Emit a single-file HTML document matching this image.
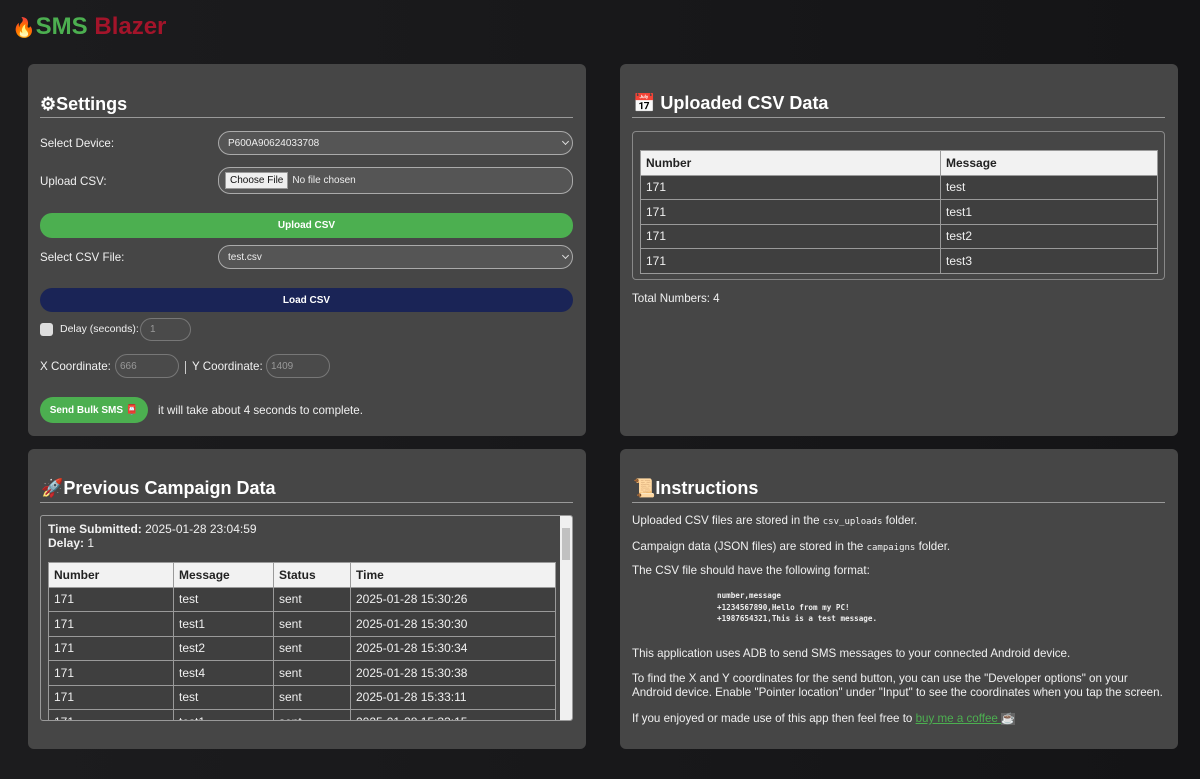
<!DOCTYPE html>
<html><head><meta charset="utf-8"><style>
*{box-sizing:border-box;margin:0;padding:0}
body{width:1200px;height:779px;overflow:hidden;background:linear-gradient(90deg,#1c1c1e,#141416);font-family:"Liberation Sans",Arial,sans-serif;color:#f0f0f0;font-size:12px;position:relative}
.a{position:absolute}
.card{position:absolute;background:#464646;border-radius:6px}
h2{position:absolute;font-size:18px;font-weight:bold;color:#fff;white-space:nowrap}
.hr{position:absolute;height:1px;background:#999}
.lbl{position:absolute;font-size:11.6px;white-space:nowrap}
.inp{position:absolute;background:#555;border:1px solid #aaa;border-radius:12px;font-size:10px;color:#eee;padding-left:9px;display:flex;align-items:center}
.ph{color:#999;border-color:#777;background:#4a4a4a}
.btn{position:absolute;border-radius:12px;color:#fff;font-weight:bold;font-size:10px;display:flex;align-items:center;justify-content:center}
table{border-collapse:collapse;position:absolute;font-size:12px}
td,th{border:1px solid #9a9a9a;text-align:left;padding:0 5px;height:24.5px;font-weight:normal}
th{background:#f2f2f2;color:#222;font-weight:bold}
td{background:#3f3f3f;color:#f0f0f0}
.mono{font-family:"DejaVu Sans Mono","Liberation Mono",monospace;font-size:9px}
.chev{position:absolute;right:4px;top:7px;width:5px;height:5px;border-right:1.5px solid #ddd;border-bottom:1.5px solid #ddd;transform:rotate(45deg)}
</style></head><body>
<div class="a" style="left:12px;top:13px;font-size:24px;font-weight:bold;white-space:nowrap"><span style="font-size:19px">🔥</span><span style="color:#4caf50">SMS</span> <span style="color:#a3142a">Blazer</span></div>

<div class="card" style="left:28px;top:64px;width:558px;height:372px"></div>
<h2 style="left:40px;top:94px">⚙Settings</h2>
<div class="hr" style="left:40px;top:117px;width:533px"></div>
<div class="lbl" style="left:40px;top:137px">Select Device:</div>
<div class="inp" style="left:218px;top:131px;width:355px;height:24px">P600A90624033708<div class="chev"></div></div>
<div class="lbl" style="left:40px;top:175px">Upload CSV:</div>
<div class="inp" style="left:218px;top:167px;width:355px;height:27px;padding-left:6px"><span style="background:#efefef;color:#111;padding:2px 4px;border:1px solid #999;font-size:10px">Choose File</span><span style="margin-left:4px">No file chosen</span></div>
<div class="btn" style="left:40px;top:213px;width:533px;height:25px;background:#4caf50">Upload CSV</div>
<div class="lbl" style="left:40px;top:251px">Select CSV File:</div>
<div class="inp" style="left:218px;top:245px;width:355px;height:24px">test.csv<div class="chev"></div></div>
<div class="btn" style="left:40px;top:288px;width:533px;height:24px;background:#1a2456">Load CSV</div>
<div class="a" style="left:40px;top:323px;width:13px;height:13px;background:#ddd;border-radius:3px"></div>
<div class="lbl" style="left:60px;top:323px;font-size:10.5px">Delay (seconds):</div>
<div class="inp ph" style="left:140px;top:318px;width:51px;height:23px">1</div>
<div class="lbl" style="left:40px;top:360px">X Coordinate:</div>
<div class="inp ph" style="left:115px;top:354px;width:64px;height:24px;padding-left:4px">666</div>
<div class="a" style="left:185px;top:361px;width:1px;height:13px;background:#ccc"></div>
<div class="lbl" style="left:192px;top:360px">Y Coordinate:</div>
<div class="inp ph" style="left:266px;top:354px;width:64px;height:24px;padding-left:4px">1409</div>
<div class="btn" style="left:40px;top:397px;width:108px;height:26px;background:#4caf50;border-radius:13px">Send Bulk SMS 📮</div>
<div class="lbl" style="left:158px;top:404px">it will take about 4 seconds to complete.</div>

<div class="card" style="left:620px;top:64px;width:558px;height:372px"></div>
<h2 style="left:633px;top:93px">📅 Uploaded CSV Data</h2>
<div class="hr" style="left:632px;top:117px;width:533px"></div>
<div class="a" style="left:632px;top:131px;width:533px;height:149px;border:1px solid #888;border-radius:4px"></div>
<table style="left:640px;top:150px;width:518px">
<tr><th style="width:300px">Number</th><th>Message</th></tr>
<tr><td>171</td><td>test</td></tr><tr><td>171</td><td>test1</td></tr><tr><td>171</td><td>test2</td></tr><tr><td>171</td><td>test3</td></tr>
</table>
<div class="lbl" style="left:632px;top:292px">Total Numbers: 4</div>

<div class="card" style="left:28px;top:449px;width:558px;height:300px"></div>
<h2 style="left:41px;top:478px">🚀Previous Campaign Data</h2>
<div class="hr" style="left:40px;top:502px;width:533px"></div>
<div class="a" style="left:40px;top:515px;width:533px;height:206px;border:1px solid #999;border-radius:3px;overflow:hidden">
<div class="a" style="left:7px;top:6px;line-height:14px">
<b>Time Submitted:</b> 2025-01-28 23:04:59<br><b>Delay:</b> 1</div>
<table style="left:7px;top:46px;width:508px">
<tr><th style="width:125px">Number</th><th style="width:100px">Message</th><th style="width:77px">Status</th><th>Time</th></tr>
<tr><td>171</td><td>test</td><td>sent</td><td>2025-01-28 15:30:26</td></tr>
<tr><td>171</td><td>test1</td><td>sent</td><td>2025-01-28 15:30:30</td></tr>
<tr><td>171</td><td>test2</td><td>sent</td><td>2025-01-28 15:30:34</td></tr>
<tr><td>171</td><td>test4</td><td>sent</td><td>2025-01-28 15:30:38</td></tr>
<tr><td>171</td><td>test</td><td>sent</td><td>2025-01-28 15:33:11</td></tr>
<tr><td>171</td><td>test1</td><td>sent</td><td>2025-01-28 15:33:15</td></tr>
</table>
<div class="a" style="right:0;top:0;width:12px;height:206px;background:#f0f0f0"></div>
<div class="a" style="right:2px;top:12px;width:8px;height:32px;background:#c1c1c1"></div>
</div>

<div class="card" style="left:620px;top:449px;width:558px;height:300px"></div>
<h2 style="left:633px;top:478px">📜Instructions</h2>
<div class="hr" style="left:632px;top:502px;width:533px"></div>
<div class="lbl" style="left:632px;top:514px">Uploaded CSV files are stored in the <span class="mono">csv_uploads</span> folder.</div>
<div class="lbl" style="left:632px;top:540px">Campaign data (JSON files) are stored in the <span class="mono">campaigns</span> folder.</div>
<div class="lbl" style="left:632px;top:564px">The CSV file should have the following format:</div>
<pre class="a mono" style="left:717px;top:590px;line-height:11.7px;color:#eee;font-size:7.6px;font-weight:bold">number,message
+1234567890,Hello from my PC!
+1987654321,This is a test message.</pre>
<div class="lbl" style="left:632px;top:647px">This application uses ADB to send SMS messages to your connected Android device.</div>
<div class="lbl" style="left:632px;top:672px;line-height:13.5px">To find the X and Y coordinates for the send button, you can use the "Developer options" on your<br>Android device. Enable "Pointer location" under "Input" to see the coordinates when you tap the screen.</div>
<div class="lbl" style="left:632px;top:712px">If you enjoyed or made use of this app then feel free to <span style="color:#4caf50;text-decoration:underline">buy me a coffee </span> <span style="background:#666;font-size:11px">☕</span></div>
</body></html>
